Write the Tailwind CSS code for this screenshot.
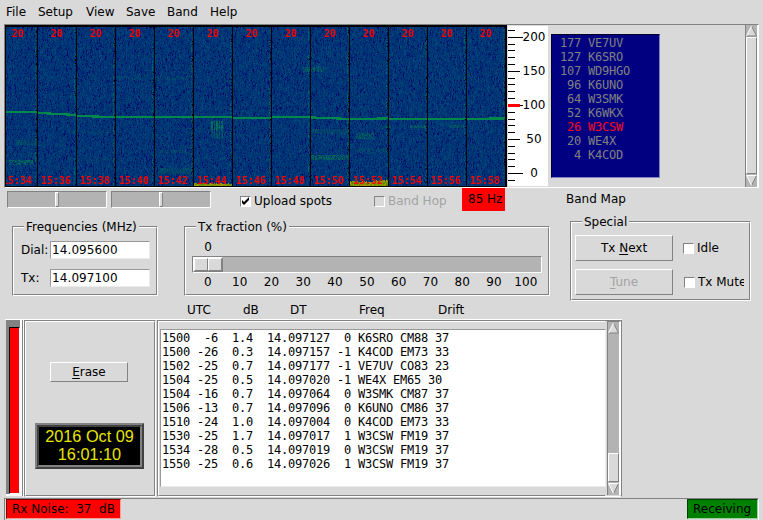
<!DOCTYPE html>
<html lang="en">
<head>
    <meta charset="UTF-8">
    <meta name="viewport" content="width=device-width, initial-scale=1.0">
    <script src="https://cdn.jsdelivr.net/npm/@tailwindcss/browser@4"></script>

    <title>WSPR</title>
</head>
<body class="bg-[#d9d9d9] overflow-hidden">
<div class="w-[763px] h-[520px] flex flex-col overflow-hidden text-black text-[12px] leading-[14px] font-['DejaVu_Sans',sans-serif] whitespace-nowrap">

    <!-- menu -->
    <nav class="h-6 pt-[5px] pl-1.5 flex shrink-0">
        <span class="w-[32px]">File</span>
        <span class="w-[48px]">Setup</span>
        <span class="w-[40px]">View</span>
        <span class="w-[41px]">Save</span>
        <span class="w-[43px]">Band</span>
        <span>Help</span>
    </nav>

    <!-- waterfall + band map -->
    <section class="h-[164px] w-[755px] ml-1 flex shrink-0 border border-t-[#828282] border-l-[#828282] border-b-white border-r-white">
        <div class="relative w-[502px] h-[162px] bg-black pt-0.5 pl-px">
            <canvas id="waterfall" width="499" height="159" class="block"></canvas>
            <div id="bands" class="absolute left-[-7px] top-[3px] flex text-[#ff0000] font-bold text-[10px] leading-[12px] font-['DejaVu_Sans_Mono',monospace]"></div>
            <div class="absolute left-px top-[150px] w-[499px] h-[12px] overflow-hidden">
                <div id="times" class="flex -ml-[8px] text-[#ff0000] font-bold text-[10px] leading-[12px] font-['DejaVu_Sans_Mono',monospace]"></div>
            </div>
        </div>

        <svg id="axis" class="ml-px mt-px block" width="40" height="160" viewBox="508 26 40 160" shape-rendering="crispEdges">
            <rect x="508" y="26" width="40" height="160" fill="#fff"/>
        </svg>

        <div class="ml-[3px] mt-[9px] w-[109px] h-[144px] bg-[#000080] border border-t-[#00002a] border-l-[#00002a] border-b-[#8080bf] border-r-[#8080bf] pl-[1px] pt-px whitespace-pre text-[#808080] text-[12px] tracking-[-0.224px] font-['DejaVu_Sans_Mono',monospace]"><div> 177 VE7UV</div><div> 127 K6SRO</div><div> 107 WD9HGO</div><div>  96 K6UNO</div><div>  64 W3SMK</div><div>  52 K6WKX</div><div class="text-[#ff0020]">  26 W3CSW</div><div>  20 WE4X</div><div>   4 K4COD</div></div>

        <div class="ml-auto w-[13px] h-[162px] flex flex-col bg-[#b3b3b3] border-l border-l-[#828282] border-r border-r-white">
            <svg class="block" width="11" height="12" viewBox="0 0 11 12"><path d="M5.5 1 L.5 11 H10.5 Z" fill="#d9d9d9"/><path d="M5.5 1 L10.5 11 H.5" fill="none" stroke="#828282"/><path d="M5.5 1 L.5 11" stroke="#fff"/></svg>
            <div class="h-[137px] bg-[#d9d9d9] border border-t-white border-l-white border-b-[#828282] border-r-[#828282]"></div>
            <svg class="block" width="11" height="13" viewBox="0 0 11 13"><path d="M.5 1.5 H10.5 L5.5 11.5 Z" fill="#d9d9d9"/><path d="M10.5 1.5 L5.5 11.5" stroke="#828282"/><path d="M10.5 1.5 H.5 L5.5 11.5" fill="none" stroke="#fff"/></svg>
        </div>
    </section>

    <!-- controls -->
    <section class="h-[131px] flex shrink-0">
        <div class="w-[560px]">
            <div class="h-[24px] flex pl-[7px]">
                <div class="mt-[3px] w-[100px] h-[17px] bg-[#b3b3b3] border border-t-[#828282] border-l-[#828282] border-b-white border-r-white pl-[47px]">
                    <div class="w-[4px] h-[15px] bg-[#d9d9d9] border border-t-white border-l-white border-b-[#828282] border-r-[#828282]"></div>
                </div>
                <div class="ml-1 mt-[3px] w-[100px] h-[17px] bg-[#b3b3b3] border border-t-[#828282] border-l-[#828282] border-b-white border-r-white pl-[47px]">
                    <div class="w-[4px] h-[15px] bg-[#d9d9d9] border border-t-white border-l-white border-b-[#828282] border-r-[#828282]"></div>
                </div>
                <label class="flex ml-[29px] mt-[6px] w-[134px]">
                    <span class="mt-0.5 mr-[3px] size-[11px] bg-white border border-t-[#828282] border-l-[#828282] border-b-white border-r-white">
                        <svg class="block" width="9" height="9" viewBox="0 0 9 9"><path d="M1 3 L3 5 L8 0 V3 L3 8 L1 6 Z" fill="#000"/></svg>
                    </span>Upload spots
                </label>
                <label class="flex mt-[6px] w-[88px] text-[#a3a3a3]">
                    <span class="mt-0.5 mr-[3px] size-[11px] border border-t-[#828282] border-l-[#828282] border-b-white border-r-white"></span>Band Hop
                </label>
                <div class="w-[43px] h-[23px] bg-[#ff0000] pt-1 pl-1.5">85 Hz</div>
            </div>

            <div class="flex pl-3 pt-[14px]">
                <div class="relative w-[146px] h-[70px] border border-t-[#828282] border-l-[#828282] border-b-white border-r-white">
                    <div class="h-[68px] border border-t-white border-l-white border-b-[#828282] border-r-[#828282] pl-[7px] pt-[13px]">
                        <div class="flex mb-[10px]">
                            <span class="w-[29px] pt-0.5">Dial:</span>
                            <span class="w-[100px] h-[18px] bg-white border border-t-[#999] border-l-[#999] border-b-[#ececec] border-r-[#ececec] pl-px pt-px tracking-[0.1px]">14.095600</span>
                        </div>
                        <div class="flex">
                            <span class="w-[29px] pt-0.5">Tx:</span>
                            <span class="w-[100px] h-[18px] bg-white border border-t-[#999] border-l-[#999] border-b-[#ececec] border-r-[#ececec] pl-px pt-px tracking-[0.1px]">14.097100</span>
                        </div>
                    </div>
                    <div class="absolute left-[11px] top-[-7px] px-0.5 bg-[#d9d9d9]">Frequencies (MHz)</div>
                </div>

                <div class="relative ml-[26px] w-[366px] h-[70px] border border-t-[#828282] border-l-[#828282] border-b-white border-r-white">
                    <div class="h-[68px] border border-t-white border-l-white border-b-[#828282] border-r-[#828282] pl-[6px] pt-[12px]">
                        <div class="w-[32px] text-center">0</div>
                        <div class="mt-0.5 w-[350px] h-[17px] bg-[#b3b3b3] border border-t-[#828282] border-l-[#828282] border-b-white border-r-white">
                            <div class="w-[30px] h-[15px] flex border border-t-white border-l-white border-b-[#828282] border-r-[#828282]">
                                <div class="w-[14px] bg-[#d9d9d9] border border-t-white border-l-white border-b-[#828282] border-r-[#828282]"></div>
                                <div class="w-[14px] bg-[#d9d9d9] border border-t-white border-l-white border-b-[#828282] border-r-[#828282]"></div>
                            </div>
                        </div>
                        <div class="flex mt-0.5 text-center tracking-[0.1px]">
                            <span class="w-[31.8px]">0</span>
                            <span class="w-[31.8px]">10</span>
                            <span class="w-[31.8px]">20</span>
                            <span class="w-[31.8px]">30</span>
                            <span class="w-[31.8px]">40</span>
                            <span class="w-[31.8px]">50</span>
                            <span class="w-[31.8px]">60</span>
                            <span class="w-[31.8px]">70</span>
                            <span class="w-[31.8px]">80</span>
                            <span class="w-[31.8px]">90</span>
                            <span class="w-[31.8px]">100</span>
                        </div>
                    </div>
                    <div class="absolute left-[11px] top-[-7px] px-0.5 bg-[#d9d9d9]">Tx fraction (%)</div>
                </div>
            </div>

            <div class="flex pl-[187px] pt-[7px]">
                <span class="w-[56px]">UTC</span>
                <span class="w-[47px]">dB</span>
                <span class="w-[69px]">DT</span>
                <span class="w-[79px]">Freq</span>
                <span>Drift</span>
            </div>
        </div>

        <div>
            <div class="pt-1 pl-1.5">Band Map</div>
            <div class="relative ml-[10px] mt-[15px] w-[181px] h-[80px] border border-t-[#828282] border-l-[#828282] border-b-white border-r-white">
                <div class="h-[78px] border border-t-white border-l-white border-b-[#828282] border-r-[#828282] pl-[3px] pt-[12px]">
                    <div class="flex mb-[8px]">
                        <div class="w-[98px] h-[26px] border border-t-white border-l-white border-b-[#828282] border-r-[#828282] text-center pt-[5px] underline-offset-2">Tx <u>N</u>ext</div>
                        <span class="ml-[10px] mt-[8px] mr-[3px] size-[11px] bg-white border border-t-[#828282] border-l-[#828282] border-b-white border-r-white"></span>
                        <span class="pt-[6px]">Idle</span>
                    </div>
                    <div class="flex">
                        <div class="w-[98px] h-[26px] border border-t-white border-l-white border-b-[#828282] border-r-[#828282] text-center pt-[5px] text-[#a3a3a3] underline-offset-2"><u>T</u>une</div>
                        <span class="ml-[11px] mt-[8px] mr-[3px] size-[11px] bg-white border border-t-[#828282] border-l-[#828282] border-b-white border-r-white"></span>
                        <span class="pt-[6px] w-[46px] overflow-hidden">Tx Mute</span>
                    </div>
                </div>
                <div class="absolute left-[11px] top-[-7px] px-0.5 bg-[#d9d9d9]">Special</div>
            </div>
        </div>
    </section>

    <!-- decodes -->
    <section class="h-[179px] w-[617px] ml-[5px] flex shrink-0 border-t border-t-white">
        <div class="w-[19px] h-[177px] pl-px pb-px border-r border-r-white">
            <div class="h-[176px] bg-[#828282] border-r border-r-[#828282]">
                <div class="h-[176px] w-[16px] pt-[7px] pl-[3px] border-r-2 border-b-2 border-r-white border-b-white">
                    <div class="h-[167px] w-[11px] bg-[#ff0000] border-t border-l border-black border-r border-r-white border-b border-b-white"></div>
                </div>
            </div>
        </div>

        <div class="w-[132px] h-[177px] border border-t-[#828282] border-l-[#828282] border-b-white border-r-white">
            <div class="h-[175px] border border-t-white border-l-white border-b-[#828282] border-r-[#828282] pl-[9px] pt-[40px]">
                <div class="ml-[15px] w-[78px] h-[20px] border border-t-white border-l-white border-b-[#828282] border-r-[#828282] text-center pt-0.5 underline-offset-2"><u>E</u>rase</div>
                <div class="mt-[41px] w-[109px] h-[46px] border-2 border-t-[#828282] border-l-[#828282] border-b-[#414141] border-r-[#414141]">
                    <div class="h-[42px] bg-black border-2 border-t-[#414141] border-l-[#414141] border-b-[#828282] border-r-[#828282] text-[#e6e600] text-center text-[16.3px] leading-[18px] font-['Liberation_Sans',sans-serif]">
                        <div>2016 Oct 09</div>
                        <div>16:01:10</div>
                    </div>
                </div>
            </div>
        </div>

        <div class="ml-px w-[465px] h-[177px] border border-t-[#828282] border-l-[#828282] border-b-white border-r-[#828282] flex">
            <div class="w-[447px] h-[175px] border-t border-l border-t-white border-l-white border-b border-b-[#828282] pt-[7px] pl-px">
                <div class="w-[446px] h-[158px] bg-white border border-t-[#999] border-l-[#999] border-b-[#ececec] border-r-[#ececec] pl-[1px] pt-px whitespace-pre text-[12px] tracking-[-0.224px] font-['DejaVu_Sans_Mono',monospace]"><div>1500  -6  1.4  14.097127  0 K6SRO CM88 37</div><div>1500 -26  0.3  14.097157 -1 K4COD EM73 33</div><div>1502 -25  0.7  14.097177 -1 VE7UV CO83 23</div><div>1504 -25  0.5  14.097020 -1 WE4X EM65 30</div><div>1504 -16  0.7  14.097064  0 W3SMK CM87 37</div><div>1506 -13  0.7  14.097096  0 K6UNO CM86 37</div><div>1510 -24  1.0  14.097004  0 K4COD EM73 33</div><div>1530 -25  1.7  14.097017  1 W3CSW FM19 37</div><div>1534 -28  0.5  14.097019  0 W3CSW FM19 37</div><div>1550 -25  0.6  14.097026  1 W3CSW FM19 37</div></div>
            </div>
            <div class="ml-[2px] w-[14px] h-[174px] flex flex-col bg-[#b3b3b3] border-l border-l-[#828282] border-t border-t-[#828282] border-r-2 border-r-white">
                <svg class="block" width="11" height="12" viewBox="0 0 11 12"><path d="M5.5 1 L.5 11 H10.5 Z" fill="#d9d9d9"/><path d="M5.5 1 L10.5 11 H.5" fill="none" stroke="#828282"/><path d="M5.5 1 L.5 11" stroke="#fff"/></svg>
                <div class="mt-[119px] h-[29px] bg-[#d9d9d9] border border-t-white border-l-white border-b-[#828282] border-r-[#828282]"></div>
                <svg class="block" width="11" height="13" viewBox="0 0 11 13"><path d="M.5 1.5 H10.5 L5.5 11.5 Z" fill="#d9d9d9"/><path d="M10.5 1.5 L5.5 11.5" stroke="#828282"/><path d="M10.5 1.5 H.5 L5.5 11.5" fill="none" stroke="#fff"/></svg>
            </div>
        </div>
    </section>

    <!-- status bar -->
    <footer class="h-[22px] w-[755px] ml-1 flex justify-between shrink-0 border-t border-l border-t-[#828282] border-l-[#828282] border-r border-r-white pl-px">
        <div class="w-[115px] h-5 bg-[#ff0000] border border-t-[#800000] border-l-[#800000] border-b-[#ff9a9a] border-r-[#ff9a9a] pl-[5px] pt-0.5 whitespace-pre">Rx Noise:  37  dB</div>
        <div class="w-[71px] h-5 bg-[#008000] border border-t-[#004000] border-l-[#004000] border-b-[#a0d0a0] border-r-[#a0d0a0] pl-[5px] pt-0.5">Receiving</div>
    </footer>
</div>

<script>
    // band and time labels, one slot every 39px
    const bands = document.getElementById('bands');
    const times = document.getElementById('times');
    for (let i = 0; i < 13; i++) {
        bands.insertAdjacentHTML('beforeend', '<span class="w-[39px] shrink-0 pl-[14px]">20</span>');
        times.insertAdjacentHTML('beforeend', '<span class="w-[39px] shrink-0 pl-[4px]">15:' + (34 + i * 2) + '</span>');
    }

    // frequency axis
    let ticks = '';
    for (let k = -1; k <= 21; k++) {
        const y = Math.round(36.7 + 6.82 * k);
        const len = k % 10 === 0 ? 15 : (k % 5 === 0 && k > 0) ? 12 : 7;
        ticks += '<rect x="508" y="' + y + '" width="' + len + '" height="1"/>';
    }
    ticks += '<rect x="508" y="104" width="12" height="3" fill="#f00"/>';
    [200, 150, 100, 50, 0].forEach((v, i) => {
        ticks += '<text x="534" y="' + Math.round(41 + i * 34.1) + '" font-size="12" text-anchor="middle">' + v + '</text>';
    });
    document.getElementById('axis').insertAdjacentHTML('beforeend', ticks);

    // waterfall
    const ctx = document.getElementById('waterfall').getContext('2d');
    let seed = 7;
    const rnd = () => (seed = (seed * 16807) % 2147483647) / 2147483647;
    const W = 499, H = 159;
    const img = ctx.createImageData(W, H);
    // carrier height at the start and end of each slot
    const carrier = [[84.5, 84.5], [85.5, 87.5], [88.5, 89.7], [89.7, 89.5], [89.7, 89.7], [89.7, 89.7], [90.7, 90.2], [89.7, 89.5], [90, 91.5], [91.7, 91], [91.5, 91.5], [91.7, 91.2], [91.5, 91]];
    // faint signals: x0, x1, y0, y1, strength
    const spots = [
        [3, 26, 133, 137, 0.45], [10, 30, 113, 117, 0.22], [0, 30, 126, 129, 0.1], [152, 184, 141, 146, 0.2],
        [304, 343, 128, 132, 0.42], [306, 343, 102, 106, 0.2], [350, 367, 106, 111, 0.35], [376, 384, 99, 101, 0.3],
        [404, 418, 98, 100, 0.35], [443, 457, 98, 100, 0.35], [297, 317, 40, 44, 0.35], [110, 185, 49, 52, 0.1],
        [350, 380, 121, 125, 0.15], [63, 110, 103, 106, 0.1], [60, 110, 131, 133, 0.1], [152, 180, 123, 125, 0.15]
    ];
    for (let x = 0; x < W; x++) {
        const slot = Math.floor((x + 8) / 39), off = (x + 8) % 39;
        let prev = rnd();
        for (let y = 0; y < H; y++) {
            prev = prev * 0.35 + (rnd() + rnd()) / 2 * 0.65;
            const v = prev;
            let r = 0, g = 14 + v * 76, b = 114 + v * 6;
            if (v < 0.27) { g = 10; b = 106; }
            let s = 0;
            for (const [x0, x1, y0, y1, a] of spots) {
                if (x >= x0 && x <= x1 && y >= y0 && y <= y1) s = a * rnd() * 1.5;
            }
            if (x > 203 && x < 217 && y > 93 && y < 112 && (x * 7) % 5 < 3) s = (y < 103 ? 0.75 : 0.35) * (0.4 + rnd() * 0.6);
            const [a0, a1] = carrier[slot];
            const d = Math.abs(y + 0.5 - (a0 + (a1 - a0) * off / 38) - 0.4);
            if (d < 1.1) s = 0.9;
            if (off === 37 && rnd() < 0.3) s = 0.5;
            g += (145 - g) * s;
            b += (70 - b) * s;
            // strong low edge in two of the slots
            const edge = slot === 5 ? 2 : slot === 9 ? 3 + (off > 25 ? 2 : 1) : 0;
            if (edge && y >= H - edge - (rnd() < 0.4 ? 1 : 0)) {
                r = 60 + rnd() * 140; g = 130 + rnd() * 30; b = 0;
            }
            if (off === 0 || (off === 38 && rnd() < 0.1)) r = g = b = 0;
            const p = (y * W + x) * 4;
            img.data[p] = r; img.data[p + 1] = g; img.data[p + 2] = b; img.data[p + 3] = 255;
        }
    }
    ctx.putImageData(img, 0, 0);
</script>
</body>
</html>
